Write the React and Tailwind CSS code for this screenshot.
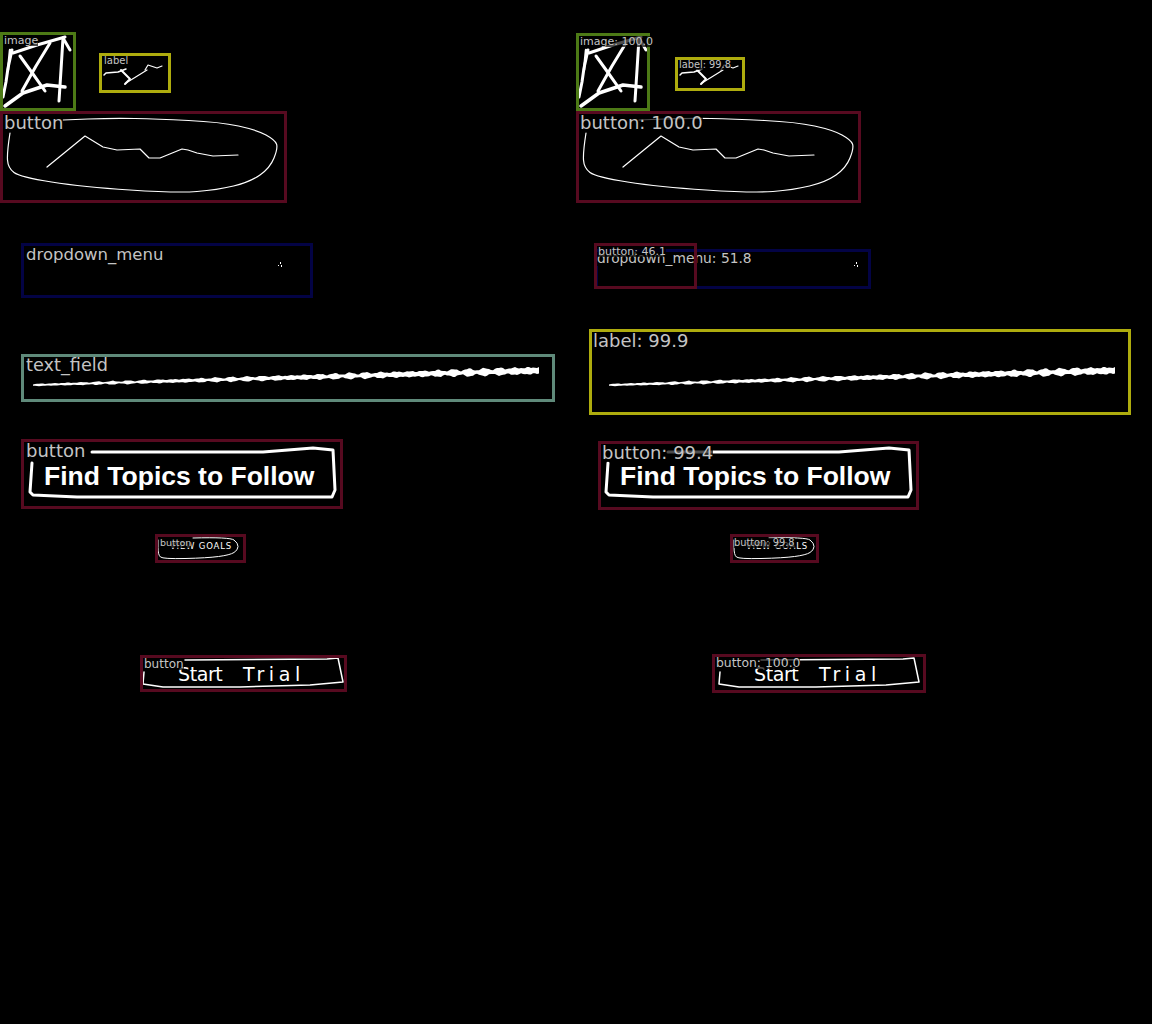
import React from "react";

const outlines = [
  { w: 3, pts: "12,50 8,68 6,82 3,97" },
  { w: 2.5, pts: "10,50 9,60 8,70" },
  { w: 3, pts: "13,53 37,45 65,37" },
  { w: 3, pts: "20,56 33,74 45,91" },
  { w: 3, pts: "22,91 36,66 50,43" },
  { w: 3, pts: "63,38 61,70 59,101" },
  { w: 3, pts: "63,38 70,50" },
  { w: 3.5, pts: "5,106 23,93 47,85 65,87" },
  { w: 1.5, pts: "104,75 106,73 118,72 126,69" },
  { w: 2, pts: "121,70 130,79 125,84" },
  { w: 1.2, pts: "126,83 147,70" },
  { w: 1.2, pts: "145,70 148,65 157,68 162,66" },
  { w: 1.2, smooth: true, pts: "10,133 7,152 8,168 20,177 83,187 177,193 217,190 250,182 270,168 278,148 275,140 257,130 220,122 157,119 113,118 63,120" },
  { w: 1.2, pts: "47,167 85,136 103,147 117,150 140,149 149,158 160,158 182,149 188,150 197,153 213,156 238,155" },
  { w: 3, pts: "92,452 263,452 313,448 333,450 335,490 332,497 77,497 33,495 30,492 32,463" },
  { w: 1, smooth: true, pts: "193,538 230,537 238,543 238,550 230,555 207,558 163,559 158,555 158,540" },
  { w: 1.5, pts: "185,660 327,659 338,658 343,682 310,685 240,687 163,687 143,684 144,672" },
];

// rounds the corners of a hand drawn line by curving through the midpoints
function smoothPath(pts) {
  const p = pts.split(" ").map((s) => s.split(",").map(Number));
  let d = `M${p[0][0]} ${p[0][1]}`;
  for (let i = 1; i < p.length - 1; i++) {
    const mx = (p[i][0] + p[i + 1][0]) / 2;
    const my = (p[i][1] + p[i + 1][1]) / 2;
    d += ` Q${p[i][0]} ${p[i][1]} ${mx} ${my}`;
  }
  const last = p[p.length - 1];
  return `${d} L${last[0]} ${last[1]}`;
}

// rough marker stroke that thickens towards its right end
function roughStroke() {
  const top = [];
  const bottom = [];
  const noise = (x, k) =>
    Math.sin(x * 12.9898 + k) * 0.6 + Math.sin(x * 0.37 + k) * 0.3 + Math.sin(x * 5.3 + k * 2) * 0.3;
  for (let x = 33; x <= 540; x += 2) {
    const t = (x - 33) / 507;
    const y = 385 - t * 14.5;
    const half = 1 + t * 2.2;
    top.push(`${x},${(y - half + noise(x, 1) * (0.5 + t)).toFixed(1)}`);
    bottom.unshift(`${x},${(y + half + noise(x, 4) * (0.5 + t)).toFixed(1)}`);
  }
  return [...top, ...bottom].join(" ");
}

function Sketch() {
  return (
    <>
      <svg className="absolute inset-0 w-full h-full" viewBox="0 0 576 1024" fill="none" stroke="#fff" strokeLinejoin="round" strokeLinecap="round">
        {outlines.map((o, i) =>
          o.smooth ? (
            <path key={i} d={smoothPath(o.pts)} strokeWidth={o.w} />
          ) : (
            <polyline key={i} points={o.pts} strokeWidth={o.w} />
          )
        )}
        <polygon points={roughStroke()} fill="#fff" stroke="none" />
        <rect x="280" y="262" width="1" height="2" fill="#fff" stroke="none" />
        <rect x="278" y="265" width="1" height="1" fill="#fff" stroke="none" />
        <rect x="281" y="265" width="1" height="2" fill="#fff" stroke="none" />
      </svg>
      <span className="absolute left-[44px] top-[460px] font-['Liberation_Sans',sans-serif] text-[26.5px] leading-[32px] font-bold text-white whitespace-nowrap">
        Find Topics to Follow
      </span>
      <span className="absolute left-[170px] top-[541px] text-[8.5px] leading-[10px] tracking-[0.8px] text-white whitespace-nowrap">
        VIEW GOALS
      </span>
      <span className="absolute left-[178px] top-[663px] text-[19px] leading-[22px] tracking-[-0.4px] text-white whitespace-nowrap">
        Start
      </span>
      <span className="absolute left-[243px] top-[663px] text-[19px] leading-[22px] tracking-[4.6px] text-white whitespace-nowrap">
        Trial
      </span>
    </>
  );
}

function Box({ x, y, w, h, color, text, size, lx = 1, ly = 0 }) {
  return (
    <div
      className={`absolute border-[3px] ${color}`}
      style={{ left: x, top: y, width: w, height: h }}
    >
      <span
        className="absolute bg-black/70 text-[#c4c4c4] leading-none whitespace-nowrap"
        style={{ fontSize: size, left: lx, top: ly }}
      >
        {text}
      </span>
    </div>
  );
}

const maroon = "border-[#570a20]";
const green = "border-[#4d7a16]";
const yellow = "border-[#aeac0e]";
const navy = "border-[#030345]";
const teal = "border-[#5f8a7a]";

const leftBoxes = [
  { x: 0, y: 32, w: 76, h: 79, color: green, text: "image", size: 11 },
  { x: 99, y: 53, w: 72, h: 40, color: yellow, text: "label", size: 10, lx: 2 },
  { x: 0, y: 111, w: 287, h: 92, color: maroon, text: "button", size: 18 },
  { x: 21, y: 243, w: 292, h: 55, color: navy, text: "dropdown_menu", size: 16.5, lx: 2, ly: 1 },
  { x: 21, y: 354, w: 534, h: 48, color: teal, text: "text_field", size: 17.7, lx: 2 },
  { x: 21, y: 439, w: 322, h: 70, color: maroon, text: "button", size: 18, lx: 2 },
  { x: 155, y: 534, w: 91, h: 29, color: maroon, text: "button", size: 9.5, lx: 2, ly: 1 },
  { x: 140, y: 655, w: 207, h: 37, color: maroon, text: "button", size: 12 },
];

const rightBoxes = [
  { x: 0, y: 33, w: 74, h: 78, color: green, text: "image: 100.0", size: 11 },
  { x: 99, y: 57, w: 70, h: 34, color: yellow, text: "label: 99.8", size: 9.8 },
  { x: 0, y: 111, w: 285, h: 92, color: maroon, text: "button: 100.0", size: 18 },
  { x: 19, y: 249, w: 276, h: 40, color: navy, text: "dropdown_menu: 51.8", size: 13.8, lx: -1 },
  { x: 18, y: 243, w: 103, h: 46, color: maroon, text: "button: 46.1", size: 11 },
  { x: 13, y: 329, w: 542, h: 86, color: yellow, text: "label: 99.9", size: 18 },
  { x: 22, y: 441, w: 321, h: 69, color: maroon, text: "button: 99.4", size: 18 },
  { x: 154, y: 534, w: 89, h: 29, color: maroon, text: "button: 99.8", size: 9.8, ly: 1 },
  { x: 136, y: 654, w: 214, h: 39, color: maroon, text: "button: 100.0", size: 12.4 },
];

function Panel({ boxes }) {
  return (
    <div className="relative w-[576px] h-full overflow-hidden">
      <Sketch />
      {boxes.map((b, i) => (
        <Box key={i} {...b} />
      ))}
    </div>
  );
}

export default function App() {
  return (
    <div className="flex w-[1152px] h-[1024px] bg-black font-['DejaVu_Sans',sans-serif]">
      <Panel boxes={leftBoxes} />
      <Panel boxes={rightBoxes} />
    </div>
  );
}
